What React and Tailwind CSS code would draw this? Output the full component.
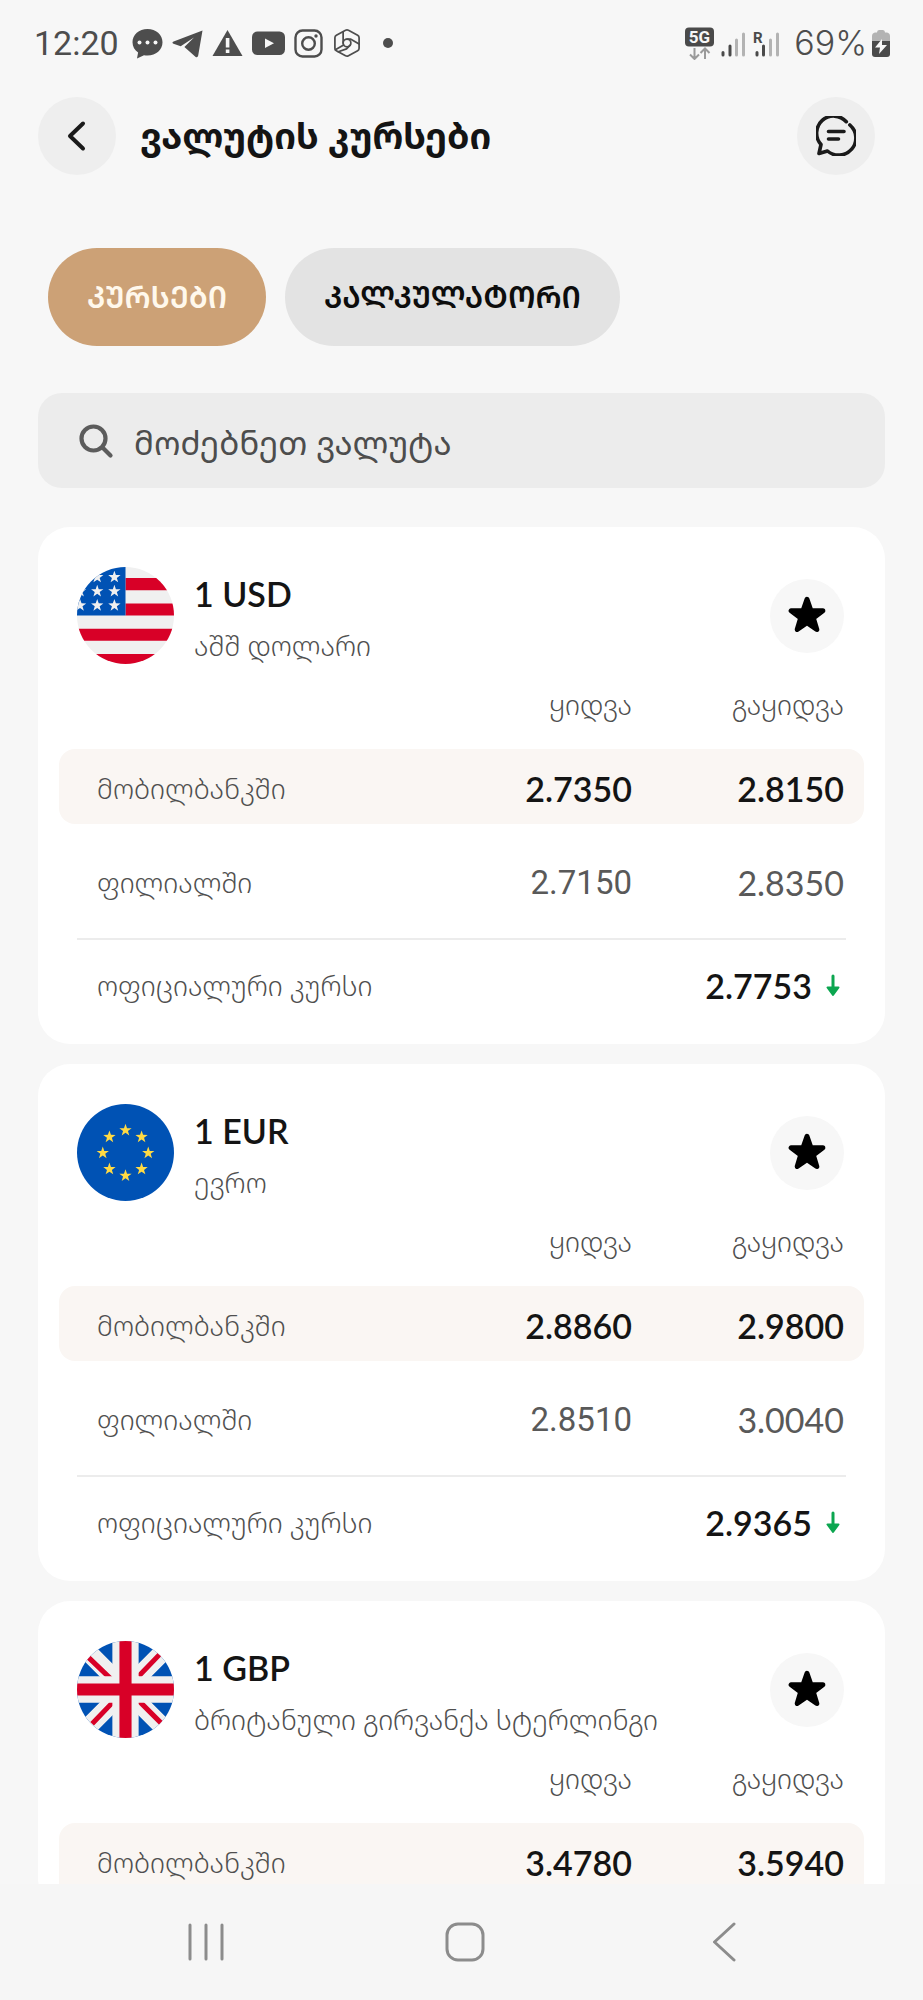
import React, { useState } from 'react';

const RATES = [
  {
    code: 'USD', name: 'აშშ დოლარი',
    mobile: ['2.7350', '2.8150'], branch: ['2.7150', '2.8350'], official: '2.7753',
  },
  {
    code: 'EUR', name: 'ევრო',
    mobile: ['2.8860', '2.9800'], branch: ['2.8510', '3.0040'], official: '2.9365',
  },
  {
    code: 'GBP', name: 'ბრიტანული გირვანქა სტერლინგი',
    mobile: ['3.4780', '3.5940'],
  },
];

const STAR = 'M0 -10 L2.35 -3.24 L9.51 -3.09 L3.8 1.24 L5.88 8.09 L0 4 L-5.88 8.09 L-3.8 1.24 L-9.51 -3.09 L-2.35 -3.24 Z';

const FlagStar = ({ x, y, s, fill }) => (
  <path d={STAR} fill={fill} transform={`translate(${x} ${y}) scale(${s})`} />
);

const UsdFlag = () => (
  <svg viewBox="0 0 96 96" className="w-[97px] h-[97px] shrink-0" aria-hidden="true">
    <clipPath id="clip-usd"><circle cx="48" cy="48" r="48" /></clipPath>
    <g clipPath="url(#clip-usd)">
      <rect width="96" height="96" fill="#f0f0f0" />
      <path d="M48 11h48v12H48zM48 36h48v12H48zM0 61h96v12H0zM0 86h96v12H0z" fill="#d80027" />
      <rect width="48" height="48" fill="#0052b4" />
      {[10, 24, 38].map(y => [3, 20, 37].map(x => (
        <FlagStar key={`${x}-${y}`} x={x} y={y} s={0.64} fill="#f0f0f0" />
      )))}
    </g>
  </svg>
);

const EurFlag = () => (
  <svg viewBox="0 0 96 96" className="w-[97px] h-[97px] shrink-0" aria-hidden="true">
    <circle cx="48" cy="48" r="48" fill="#0052b4" />
    {[0, 45, 90, 135, 180, 225, 270, 315].map(a => (
      <FlagStar
        key={a}
        x={48 + 22.5 * Math.sin((a * Math.PI) / 180)}
        y={48.5 - 22.5 * Math.cos((a * Math.PI) / 180)}
        s={0.64}
        fill="#ffda44"
      />
    ))}
  </svg>
);

const GbpFlag = () => (
  <svg viewBox="0 0 96 96" className="w-[97px] h-[97px] shrink-0" aria-hidden="true">
    <clipPath id="clip-gbp"><circle cx="48" cy="48" r="48" /></clipPath>
    <g clipPath="url(#clip-gbp)">
      <rect width="96" height="96" fill="#0052b4" />
      <path d="M0 0L96 96M96 0L0 96" stroke="#f0f0f0" strokeWidth="18" />
      <path d="M9 14L34 38M83 12L61 35M15 82L36 60M86 84L61 59" stroke="#d80027" strokeWidth="5" />
      <path d="M48 0V96M0 48H96" stroke="#f0f0f0" strokeWidth="26" />
      <path d="M48 0V96M0 48H96" stroke="#d80027" strokeWidth="12" />
    </g>
  </svg>
);

const FLAGS = { USD: UsdFlag, EUR: EurFlag, GBP: GbpFlag };

const StatusBar = () => (
  <div className="flex items-center justify-between h-[86px] pl-[34px] pr-8 text-[#4d4d4d] font-['Roboto',sans-serif] text-[34px] leading-10 shrink-0">
    <div className="flex items-center gap-[9px]">
      <span className="mr-1">12:20</span>
      <svg width="31" height="31" viewBox="0 0 31 31" fill="currentColor" aria-hidden="true">
        <path d="M15.500 1C7 1 .5 6.800 .5 14.200c0 4.300 2.200 8 5.600 10.400L5 30.500l7-3.300c1.100.2 2.300.3 3.500.3C24 27.500 30.500 21.600 30.500 14.200S24 1 15.500 1Z" />
        <g fill="#f7f7f7"><circle cx="7.500" cy="14.500" r="2" /><circle cx="15.500" cy="14.500" r="2" /><circle cx="23.500" cy="14.500" r="2" /></g>
      </svg>
      <svg width="31" height="31" viewBox="0 0 31 31" fill="currentColor" aria-hidden="true">
        <path d="M30.500 2.500L1.600 13.600c-1.500.6-1.500 1.700-.1 2.200l7.200 2.400L22 9.500 12.400 19l11 9.800c1.300 1 2.400.5 2.800-1.200Z" />
      </svg>
      <svg width="31" height="31" viewBox="0 0 31 31" fill="currentColor" aria-hidden="true">
        <path d="M15.500 2L30.500 28H.5Z" />
        <path d="M13.800 10h3.600v9.500h-3.600zM13.800 21.500h3.600v3.500h-3.600z" fill="#f7f7f7" />
      </svg>
      <svg width="33" height="31" viewBox="0 0 33 31" fill="currentColor" aria-hidden="true">
        <rect y="3.500" width="33" height="23.500" rx="5.500" />
        <path d="M13 10.500L22 15.300 13 20Z" fill="#f7f7f7" />
      </svg>
      <svg width="29" height="31" viewBox="0 0 29 31" fill="none" stroke="currentColor" strokeWidth="2.400" aria-hidden="true">
        <rect x="1.500" y="2.500" width="26" height="26" rx="7" />
        <circle cx="14.500" cy="15.500" r="6.300" />
        <circle cx="22" cy="8" r="1.700" fill="currentColor" stroke="none" />
      </svg>
      <svg width="30" height="30" viewBox="-1 -1 30 31" fill="none" stroke="currentColor" strokeWidth="1.800" strokeLinejoin="round" strokeLinecap="round" aria-hidden="true">
        <path d="M12.500 1.300Q14 .5 15.500 1.300L25 6.500Q26.500 7.300 26.500 9V20Q26.500 21.700 25 22.500L15.500 27.700Q14 28.500 12.500 27.700L3 22.500Q1.500 21.700 1.500 20V9Q1.500 7.300 3 6.500Z" />
        <circle cx="14" cy="14.500" r="4" />
        <path d="M10 14.500V3M14 10.500H18L26.500 15.500M17.500 16.500L13.500 20.500 5 23.500M10.500 16.500L2 21.500" />
      </svg>
      <span className="w-2.5 h-2.5 ml-3 rounded-full bg-[#4d4d4d]" />
    </div>

    <div className="flex items-center gap-1.5">
      <svg width="29" height="33" viewBox="0 0 29 33" aria-hidden="true">
        <rect y=".5" width="29" height="19" rx="4" fill="#4a4a4a" />
        <text x="14.500" y="16" textAnchor="middle" fontSize="17" fontWeight="700" fontFamily="Roboto" fill="#f7f7f7">5G</text>
        <path d="M9.500 21V32M5 27.500L9.500 32 14 27.500M20 32V21.500M15.500 26L20 21.500 24.500 26" fill="none" stroke="#9a9a9a" strokeWidth="2" />
      </svg>
      <svg width="26" height="28" viewBox="0 0 26 28" strokeWidth="3" strokeLinecap="round" aria-hidden="true">
        <path d="M3 23.500V26M10 17V26" stroke="#4a4a4a" />
        <path d="M16.500 11V26M23.500 5V26" stroke="#b3b3b3" />
      </svg>
      <svg width="28" height="28" viewBox="0 0 28 28" strokeWidth="3" strokeLinecap="round" aria-hidden="true">
        <path d="M5 23.500V26M11.500 17V26" stroke="#4a4a4a" />
        <path d="M18.500 11V26M25.500 5V26" stroke="#b3b3b3" />
        <text x="1" y="14" fontSize="15" fontWeight="700" fontFamily="Roboto" fill="#4a4a4a">R</text>
      </svg>
      <div className="flex items-center gap-1 ml-2">
        <span className="font-['Inter',sans-serif] font-light">69%</span>
        <svg width="20" height="28" viewBox="0 0 20 28" aria-hidden="true">
          <path d="M6 3.500Q6 1 8 1H12Q14 1 14 3.500H16Q19 4 19 7V13H1V7Q1 4 4 3.500Z" fill="#b3b3b3" />
          <path d="M1 12H19V25Q19 28 16 28H4Q1 28 1 25Z" fill="#4a4a4a" />
          <path d="M11 10L4 18.500H9L8 25 16 16H11Z" fill="#f7f7f7" />
        </svg>
      </div>
    </div>
  </div>
);

const Header = () => (
  <header className="flex items-center justify-between px-[38px] h-[100px] shrink-0">
    <div className="flex items-center gap-6">
      <button aria-label="უკან" className="w-[78px] h-[78px] rounded-full bg-[#eeeeee] flex items-center justify-center">
        <svg width="32" height="32" viewBox="0 0 32 32" fill="none" stroke="#1a1a1a" strokeWidth="4" strokeLinecap="round" strokeLinejoin="round" aria-hidden="true">
          <path d="M22 3.500L9 16 22 28.500" />
        </svg>
      </button>
      <h1 className="text-[36px] leading-10 font-bold text-[#141414]">ვალუტის კურსები</h1>
    </div>
    <button aria-label="ჩატი" className="w-[78px] h-[78px] mr-2.5 rounded-full bg-[#eeeeee] flex items-center justify-center">
      <svg width="40" height="40" viewBox="0 0 40 40" fill="none" stroke="#1a1a1a" strokeWidth="3.600" strokeLinecap="round" strokeLinejoin="round" aria-hidden="true">
        <path d="M30.300 5.700A17 17 0 0 0 5 28.500L3 37.500 11.500 35A17 17 0 0 0 33.900 9" />
        <path d="M12.500 15.500H28M12.500 23H22.500" />
      </svg>
    </button>
  </header>
);

const Tabs = ({ active, onChange }) => {
  const base = 'h-[98px] px-[39px] rounded-full text-[30px] leading-9 font-semibold';
  return (
    <nav className="flex gap-[19px] px-12 pt-[62px] shrink-0">
      <button
        onClick={() => onChange('rates')}
        className={`${base} ${active === 'rates' ? 'bg-[#cca176] text-[#fff8ec]' : 'bg-[#e3e3e3] text-[#0d0d0d]'}`}
      >
        ᲙᲣᲠᲡᲔᲑᲘ
      </button>
      <button
        onClick={() => onChange('calculator')}
        className={`${base} ${active === 'calculator' ? 'bg-[#cca176] text-[#fff8ec]' : 'bg-[#e3e3e3] text-[#0d0d0d]'}`}
      >
        ᲙᲐᲚᲙᲣᲚᲐᲢᲝᲠᲘ
      </button>
    </nav>
  );
};

const RateCard = ({ rate }) => {
  const Flag = FLAGS[rate.code];
  const label = 'font-light text-[27px] leading-9 text-[#4f4f4f]';
  const num = "text-right font-['Lato',sans-serif] text-[34px] leading-10";

  return (
    <article className="bg-white rounded-[32px] pt-10 px-[21px] pb-3">
      <div className="flex items-center h-[97px] pl-[18px] pr-5">
        <Flag />
        <div className="flex-1 pl-5 pt-1.5">
          <h2 className="font-['Lato',sans-serif] font-semibold text-[34px] leading-10 text-[#141414]">1 {rate.code}</h2>
          <p className={`${label} mt-3.5`}>{rate.name}</p>
        </div>
        <button aria-label="რჩეული" className="w-[74px] h-[74px] rounded-full bg-[#f7f7f7] flex items-center justify-center">
          <svg width="40" height="40" viewBox="-12 -12 24 24" aria-hidden="true">
            <path d={STAR} fill="#000" stroke="#000" strokeWidth="3" strokeLinejoin="round" />
          </svg>
        </button>
      </div>

      <table className="w-full border-separate border-spacing-0">
        <thead>
          <tr className="h-[85px]">
            <td />
            <th scope="col" className={`${label} w-[212px] pb-1 text-right`}>ყიდვა</th>
            <th scope="col" className={`${label} w-[232px] pr-5 pb-1 text-right`}>გაყიდვა</th>
          </tr>
        </thead>
        <tbody>
          <tr className="h-[75px]">
            <th scope="row" className={`${label} pl-[38px] pt-1 text-left bg-[#faf6f3] rounded-l-2xl`}>მობილბანკში</th>
            <td className={`${num} pt-1 bg-[#faf6f3] font-semibold text-[#141414]`}>{rate.mobile[0]}</td>
            <td className={`${num} pr-5 pt-1 bg-[#faf6f3] rounded-r-2xl font-semibold text-[#141414]`}>{rate.mobile[1]}</td>
          </tr>
          {rate.branch && (
            <tr className="h-[114px]">
              <th scope="row" className={`${label} pl-[38px] pt-1 text-left`}>ფილიალში</th>
              <td className="pt-1 text-right font-['Roboto',sans-serif] text-[33px] leading-10 text-[#595959]">{rate.branch[0]}</td>
              <td className={`${num} pr-5 pt-1 text-[#595959]`}>{rate.branch[1]}</td>
            </tr>
          )}
        </tbody>
      </table>

      {rate.official && (
        <>
          <div className="mx-[18px] h-0.5 bg-[#ececec]" />
          <div className="flex items-center justify-between h-[92px] pl-[38px] pr-6">
            <span className={label}>ოფიციალური კურსი</span>
            <span className="flex items-center gap-3.5">
              <strong className={`${num} font-semibold text-[#141414]`}>{rate.official}</strong>
              <svg width="14" height="24" viewBox="0 0 14 24" role="img" aria-label="კლება">
                <path d="M7 2V14" stroke="#0ca650" strokeWidth="3" strokeLinecap="round" />
                <path d="M1.500 13.500H12.500L7 21Z" fill="#0ca650" stroke="#0ca650" strokeWidth="2" strokeLinejoin="round" />
              </svg>
            </span>
          </div>
        </>
      )}
    </article>
  );
};

const SystemNav = () => (
  <nav className="grid grid-cols-3 justify-items-center items-center h-[116px] pl-[76px] pr-[70px] bg-[#f6f6f6] text-[#8c8c8c] shrink-0">
    <button aria-label="ბოლო აპები">
      <svg width="38" height="40" viewBox="0 0 38 40" stroke="currentColor" strokeWidth="3" strokeLinecap="round">
        <path d="M3 3V37M19 3V37M35 3V37" />
      </svg>
    </button>
    <button aria-label="მთავარი">
      <svg width="40" height="40" viewBox="0 0 40 40" fill="none" stroke="currentColor" strokeWidth="3">
        <rect x="2" y="2" width="36" height="36" rx="11" />
      </svg>
    </button>
    <button aria-label="უკან დაბრუნება">
      <svg width="24" height="40" viewBox="0 0 24 40" fill="none" stroke="currentColor" strokeWidth="3" strokeLinecap="round" strokeLinejoin="round">
        <path d="M22 2L2.500 20 22 38" />
      </svg>
    </button>
  </nav>
);

export default function App() {
  const [tab, setTab] = useState('rates');
  const [query, setQuery] = useState('');

  const needle = query.trim().toLowerCase();
  const shown = RATES.filter(r => `${r.code} ${r.name}`.toLowerCase().includes(needle));

  return (
    <div lang="ka" className="h-screen flex flex-col overflow-hidden bg-[#f7f7f7] font-['Noto_Sans','Noto_Sans_Georgian','DejaVu_Sans',sans-serif]">
      <StatusBar />
      <Header />
      <Tabs active={tab} onChange={setTab} />

      <main className="flex-1 min-h-0 overflow-hidden px-[38px] pt-[47px]">
        <label className="flex items-center gap-5 h-[95px] px-10 rounded-3xl bg-[#ececec]">
          <svg width="36" height="36" viewBox="0 0 36 36" fill="none" stroke="#5c5c5c" strokeWidth="4.200" strokeLinecap="round" aria-hidden="true">
            <circle cx="15.500" cy="15.500" r="12" />
            <path d="M24.500 24.500L32.500 32.500" />
          </svg>
          <input
            type="text"
            value={query}
            onChange={e => setQuery(e.target.value)}
            placeholder="მოძებნეთ ვალუტა"
            aria-label="მოძებნეთ ვალუტა"
            className="flex-1 min-w-0 pt-1 bg-transparent outline-none text-[33px] leading-10 text-[#4d4d4d] placeholder:text-[#4d4d4d]"
          />
        </label>

        <div className="flex flex-col gap-5 mt-[39px]">
          {shown.map(rate => <RateCard key={rate.code} rate={rate} />)}
        </div>
      </main>

      <SystemNav />
    </div>
  );
}
